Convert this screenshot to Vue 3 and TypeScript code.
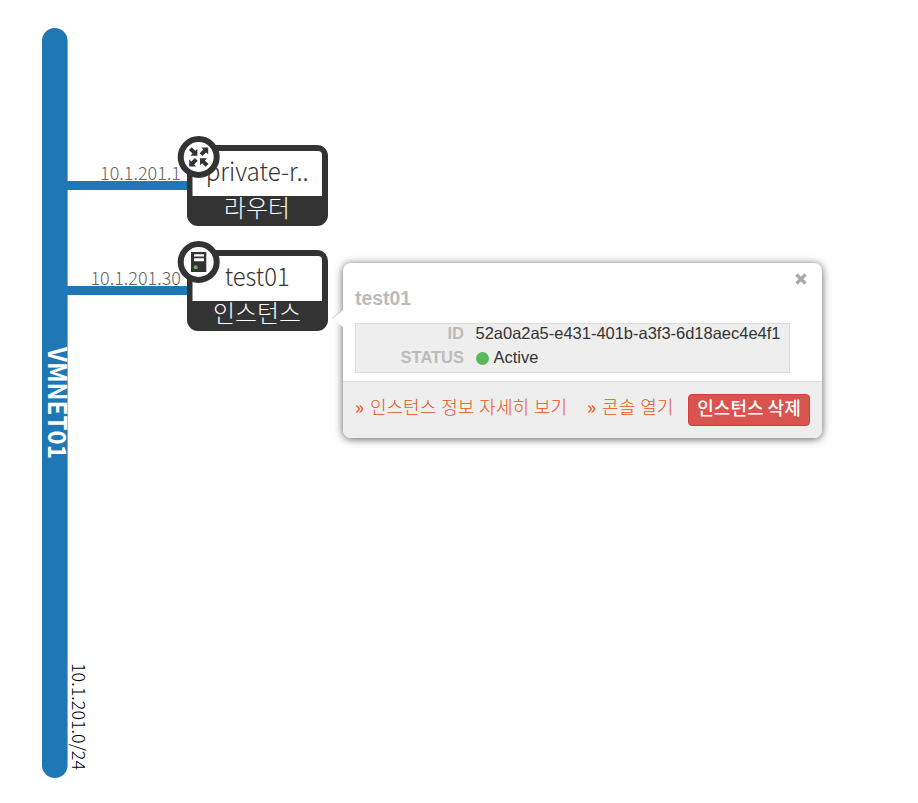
<script setup lang="ts">
interface Device {
  name: string
  kind: string
  ip: string
  y: number
  icon: 'router' | 'server'
  nameWidth: number
  kindWidth: number
  ipWidth: number
}

const devices: Device[] = [
  { name: 'private-r..', kind: '라우터', ip: '10.1.201.1', y: 145, icon: 'router', nameWidth: 103, kindWidth: 66, ipWidth: 81 },
  { name: 'test01', kind: '인스턴스', ip: '10.1.201.30', y: 250, icon: 'server', nameWidth: 65, kindWidth: 88, ipWidth: 90.5 },
]

const arrowAngles: number[] = [0, 90, 180, 270]
</script>

<template>
  <main class="topology">
    <svg class="canvas" width="918" height="803" viewBox="0 0 918 803">
      <rect class="network" x="42" y="28" width="25.6" height="750" rx="12.8" />
      <text class="network-name" transform="translate(48 347) rotate(90)" textLength="112" lengthAdjust="spacingAndGlyphs">VMNET01</text>
      <text class="cidr" transform="translate(72 663) rotate(90)" textLength="107" lengthAdjust="spacingAndGlyphs">10.1.201.0/24</text>

      <g v-for="device in devices" :key="device.name" :transform="`translate(187 ${device.y})`">
        <rect class="network" x="-120" y="36" width="122" height="9" />
        <text class="ip" x="-6" y="35" text-anchor="end" :textLength="device.ipWidth" lengthAdjust="spacingAndGlyphs">{{ device.ip }}</text>
        <rect class="frame" width="141" height="81" rx="11" />
        <path class="face" d="M5.500 51V10Q5.500 6 9.500 6H131Q135 6 135 10V51Z" />
        <text class="name" x="70.200" y="36" text-anchor="middle" :textLength="device.nameWidth" lengthAdjust="spacingAndGlyphs">{{ device.name }}</text>
        <text class="kind" x="70" y="72" text-anchor="middle" :textLength="device.kindWidth" lengthAdjust="spacingAndGlyphs">{{ device.kind }}</text>
        <circle class="badge" cx="11.700" cy="12" r="18" />
        <g v-if="device.icon === 'router'" transform="translate(11.700 12)">
          <g v-for="angle in arrowAngles" :key="angle" :transform="`rotate(${angle})`">
            <path
              class="glyph"
              :d="angle % 180 === 0
                ? 'M-1.300 -1.300V-8.300L-3.400 -6.200L-7 -9.800L-9.800 -7L-6.200 -3.400L-8.300 -1.300Z'
                : 'M-9.500 -9.500V-2.500L-7.400 -4.600L-3.800 -1L-1 -3.800L-4.600 -7.400L-2.500 -9.500Z'"
            />
          </g>
        </g>
        <g v-else>
          <path class="glyph" d="M4 2H19.300V22H4Z" />
          <path class="face" d="M7 4.300H17V6.500H7ZM7 8.200H17V11.300H7Z" />
          <circle class="led" cx="8.700" cy="17.300" r="2" />
        </g>
      </g>
    </svg>

    <section class="balloon">
      <svg class="tip" width="13" height="20" viewBox="0 0 13 20">
        <path d="M13 0L1 9.500L13 19Z" fill="#fff" />
        <path d="M12 .8L1 9.500" fill="none" stroke="#ccc" />
      </svg>
      <div class="content">
        <button class="close" type="button" aria-label="Close">
          <svg width="12" height="12" viewBox="0 0 12 12"><path d="M1.500 1.500L10.500 10.500M10.500 1.500L1.500 10.500" /></svg>
        </button>
        <h1>test01</h1>
        <dl>
          <dt>ID</dt>
          <dd>52a0a2a5-e431-401b-a3f3-6d18aec4e4f1</dd>
          <dt>STATUS</dt>
          <dd><i class="dot"></i>Active</dd>
        </dl>
      </div>
      <footer>
        <a class="details"><span class="mark">»</span>인스턴스 정보 자세히 보기</a>
        <a class="console"><span class="mark">»</span>콘솔 열기</a>
        <button class="delete" type="button">인스턴스 삭제</button>
      </footer>
    </section>
  </main>
</template>

<style>
body { background: #fff; }
</style>

<style scoped>
.topology {
  position: relative;
  width: 918px;
  height: 803px;
  overflow: hidden;
  font-family: "Noto Sans CJK KR", sans-serif;
}
.canvas { display: block; }
.network { fill: #1f77b4; }
.network-name { fill: #fff; font-size: 25px; font-weight: 700; }
.cidr { fill: #000; font-size: 18px; font-weight: 300; }
.ip { fill: #636363; font-size: 18px; font-weight: 300; }
.frame, .glyph { fill: #333; }
.face { fill: #fff; }
.name { fill: #333; font-size: 25px; font-weight: 300; }
.kind { fill: #fff; font-size: 24px; font-weight: 300; }
.badge { fill: #fff; stroke: #333; stroke-width: 6; }
.led { fill: #5cb85c; }

.balloon {
  position: absolute;
  left: 343px;
  top: 263px;
  width: 479px;
  height: 175px;
  display: flex;
  flex-direction: column;
  border-radius: 8px;
  background: #fff;
  box-shadow: 0 1px 8px rgba(0, 0, 0, 0.65);
  font-family: "Liberation Sans", "Noto Sans CJK KR", sans-serif;
}
.tip { position: absolute; left: -12px; top: 46px; }
.content {
  position: relative;
  height: 118px;
  box-sizing: border-box;
  padding: 24px 12px 0;
}
.close {
  position: absolute;
  right: 15px;
  top: 10px;
  width: 12px;
  height: 12px;
  padding: 0;
  border: 0;
  background: none;
}
.close svg { display: block; }
.close path { fill: none; stroke: #aaa; stroke-width: 3.300; }
h1 {
  margin: 0 0 13px;
  color: #bbb;
  font-size: 19.400px;
  line-height: 23px;
  font-weight: 700;
}
dl {
  display: grid;
  grid-template-columns: 108px auto;
  grid-template-rows: 18px 18px;
  row-gap: 6px;
  column-gap: 12px;
  width: 435px;
  height: 50px;
  margin: 0;
  box-sizing: border-box;
  border: 1px solid #ddd;
  background: #eee;
  font-size: 16.480px;
  line-height: 18px;
}
dt { text-align: right; color: #bbb; font-weight: 700; }
dd { display: flex; align-items: center; height: 18px; margin: 0 0 0 -0.500px; color: #333; white-space: nowrap; }
.dot { width: 13px; height: 13px; margin-right: 5px; border-radius: 50%; background: #5cb85c; position: relative; top: 1px; }
footer {
  display: flex;
  align-items: flex-start;
  height: 57px;
  box-sizing: border-box;
  padding: 12px 12px 0;
  border-top: 1px solid #ddd;
  border-radius: 0 0 8px 8px;
  background: #eee;
  font-family: "Noto Sans CJK KR", sans-serif;
  font-size: 18px;
  line-height: 25px;
  font-weight: 300;
  white-space: nowrap;
}
footer a { color: #e95420; word-spacing: 1px; }
.mark { display: inline-block; width: 15px; font-weight: 400; font-size: 19px; line-height: 20px; }
.console { margin-left: 20px; }
.delete {
  width: 122px;
  height: 32px;
  margin-left: auto;
  padding: 0 0 5px;
  border: 1px solid #d43f3a;
  border-radius: 4px;
  background: #d9534f;
  color: #fff;
  font: 500 18px/25px "Noto Sans CJK KR", sans-serif;
}
</style>
